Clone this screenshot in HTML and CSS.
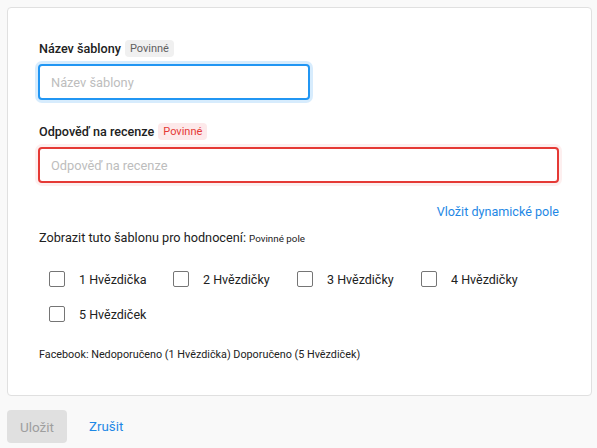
FILE: index.html
```html
<!DOCTYPE html>
<html lang="cs">
<head>
<meta charset="utf-8">
<link rel="stylesheet" href="styles.css">
</head>
<body>
<div class="page">
  <div class="card">
    <div class="field">
      <div class="label-row"><span class="label">Název šablony</span><span class="badge">Povinné</span></div>
      <div class="input input-focus short"><span class="ph">Název šablony</span></div>
    </div>
    <div class="field field-2">
      <div class="label-row"><span class="label">Odpověď na recenze</span><span class="badge badge-error">Povinné</span></div>
      <div class="input input-error"><span class="ph">Odpověď na recenze</span></div>
    </div>
    <div class="link-row"><a class="link">Vložit dynamické pole</a></div>
    <div class="show-row">Zobrazit tuto šablonu pro hodnocení: <span class="small">Povinné pole</span></div>
    <div class="checks">
      <label class="check"><span class="box"></span><span>1 Hvězdička</span></label>
      <label class="check"><span class="box"></span><span>2 Hvězdičky</span></label>
      <label class="check"><span class="box"></span><span>3 Hvězdičky</span></label>
      <label class="check"><span class="box"></span><span>4 Hvězdičky</span></label>
      <label class="check"><span class="box"></span><span>5 Hvězdiček</span></label>
    </div>
    <div class="note">Facebook: Nedoporučeno (1 Hvězdička) Doporučeno (5 Hvězdiček)</div>
  </div>
  <div class="actions">
    <button class="btn-save">Uložit</button>
    <a class="link cancel">Zrušit</a>
  </div>
</div>
</body>
</html>
```
FILE: styles.css
```css
html, body {
  margin: 0;
  padding: 0;
  background: #f9f9f9;
  font-family: Roboto, "Noto Sans", sans-serif;
  color: #212121;
}
.page {
  padding: 7px 5px 0 7px;
}
.card {
  background: #fff;
  border: 1px solid #e0e0e0;
  border-radius: 4px;
  padding: 32px 32px 32px 30px;
  display: flex;
  flex-direction: column;
}
.field {
  display: flex;
  flex-direction: column;
  gap: 7px;
}
.field-2 {
  margin-top: 23px;
}
.label-row {
  display: flex;
  align-items: center;
  gap: 4px;
  height: 17px;
  padding-left: 1px;
}
.label {
  font-size: 12.6px;
  font-weight: 500;
  color: #212121;
}
.badge {
  font-size: 11px;
  color: #616161;
  background: #f0f0f0;
  border-radius: 4px;
  padding: 0 5px;
  line-height: 17px;
}
.badge-error {
  color: #e53935;
  background: #fde9ea;
}
.input {
  box-sizing: border-box;
  height: 36px;
  border-radius: 4px;
  display: flex;
  align-items: center;
  padding: 0 11px;
  background: #fff;
}
.short {
  width: 272px;
}
.input-focus {
  border: 2px solid #2196f3;
  box-shadow: 0 0 0 3px rgba(33, 150, 243, 0.18);
}
.input-error {
  border: 2px solid #e53935;
  box-shadow: 0 0 0 3px rgba(229, 57, 53, 0.08);
}
.ph {
  font-size: 12.8px;
  color: #bdbdbd;
}
.link {
  color: #1e88e5;
  font-size: 12.6px;
  text-decoration: none;
  cursor: pointer;
}
.link-row {
  margin-top: 20px;
  display: flex;
  justify-content: flex-end;
  line-height: 18px;
}
.show-row {
  margin-top: 8px;
  font-size: 12.7px;
  line-height: 18px;
  padding-left: 1px;
}
.small {
  font-size: 9.8px;
}
.checks {
  margin-top: 19px;
  padding-left: 11px;
  display: grid;
  grid-template-columns: repeat(4, 124px);
  row-gap: 11px;
}
.check {
  display: flex;
  align-items: center;
  gap: 14px;
  height: 24px;
  font-size: 12.5px;
  color: #212121;
}
.box {
  box-sizing: border-box;
  width: 16px;
  height: 16px;
  border: 1.5px solid #757575;
  border-radius: 2px;
}
.note {
  margin-top: 21px;
  font-size: 10.8px;
  line-height: 16px;
  padding-left: 1px;
}
.actions {
  margin-top: 14px;
  display: flex;
  align-items: center;
  gap: 22px;
}
.btn-save {
  width: 60px;
  height: 33px;
  border: none;
  border-radius: 4px;
  background: #e0e0e0;
  color: #9e9e9e;
  font-family: Roboto, sans-serif;
  font-size: 13.5px;
  padding: 0;
}
.cancel {
  font-size: 13.3px;
}
```
